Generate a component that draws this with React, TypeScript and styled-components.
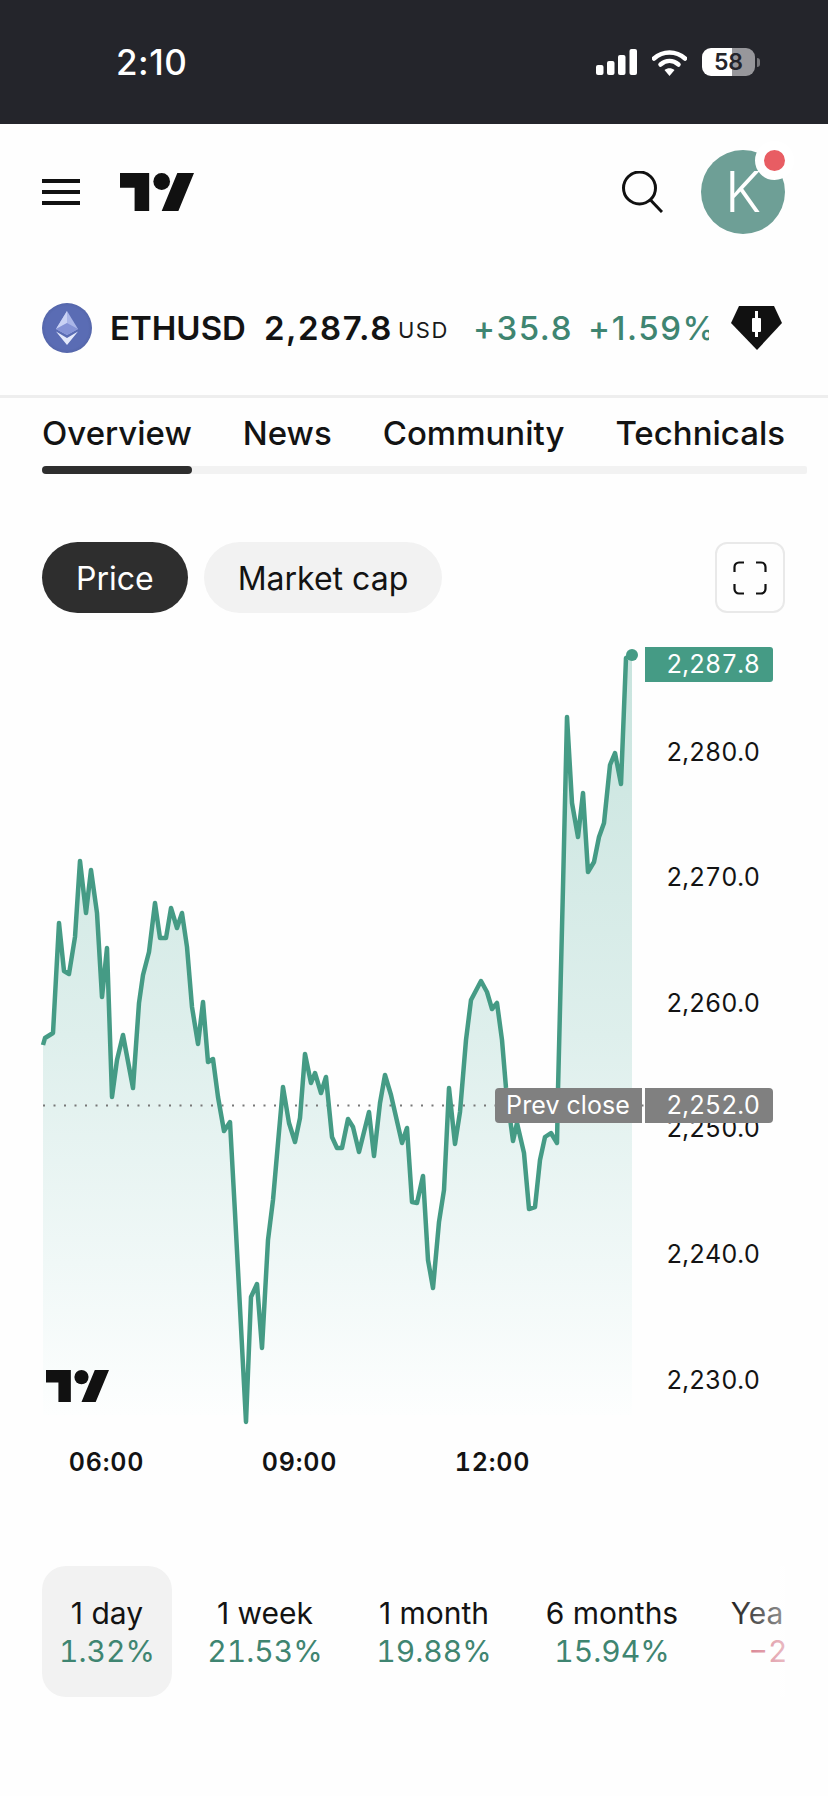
import React from "react";
import styled, { createGlobalStyle } from "styled-components";

const Global = createGlobalStyle`
  html, body { margin: 0; padding: 0; background: #fff; }
  body { width: 828px; height: 1796px; overflow: hidden; font-family: Inter, "Noto Sans", sans-serif; color: #131313; }
`;

const Page = styled.div`
  width: 828px;
  height: 1796px;
  overflow: hidden;
  background: #fefefe;
  display: flex;
  flex-direction: column;
`;

const StatusBar = styled.div`
  height: 124px;
  flex: none;
  background: #24252b;
  display: flex;
  align-items: center;
  padding: 0 73px 0 116px;
  box-sizing: border-box;
`;
const Clock = styled.div`
  color: #fff;
  font-size: 35px;
  font-weight: 500;
  letter-spacing: 0.5px;
  flex: 1;
`;
const StatusIcons = styled.div`
  display: flex;
  align-items: center;
  gap: 15px;
`;
const Battery = styled.div`
  position: relative;
  width: 53px;
  height: 28px;
  border-radius: 9px;
  background: linear-gradient(to right, #fff 0 57%, #97979b 57% 100%);
  color: #24252b;
  font-size: 23px;
  font-weight: 600;
  text-align: center;
  line-height: 28px;
  &::after {
    content: "";
    position: absolute;
    right: -5px;
    top: 10px;
    width: 3px;
    height: 9px;
    border-radius: 0 3px 3px 0;
    background: #77777b;
  }
`;

const Header = styled.div`
  height: 136px;
  flex: none;
  display: flex;
  align-items: center;
  padding: 0 43px 0 42px;
  box-sizing: border-box;
`;
const Burger = styled.div`
  width: 38px;
  height: 26px;
  display: flex;
  flex-direction: column;
  justify-content: space-between;
  margin-right: 40px;
  span {
    display: block;
    height: 4px;
    background: #111;
  }
`;
const HeaderSpacer = styled.div`
  flex: 1;
`;
const Avatar = styled.div`
  position: relative;
  width: 84px;
  height: 84px;
  margin-left: 38px;
  border-radius: 50%;
  background: #6e9f96;
  color: #fff;
  font-size: 56px;
  font-weight: 300;
  text-align: center;
  line-height: 84px;
`;
const AvatarDot = styled.div`
  position: absolute;
  top: -9px;
  right: -9px;
  width: 21px;
  height: 21px;
  border-radius: 50%;
  background: #e85d63;
  border: 9px solid #fff;
`;

const Ticker = styled.div`
  height: 138px;
  flex: none;
  display: flex;
  align-items: center;
  padding: 0 46px 0 42px;
  box-sizing: border-box;
  border-bottom: 3px solid #eeeeee;
`;
const CoinIcon = styled.div`
  width: 50px;
  height: 50px;
  border-radius: 50%;
  background: radial-gradient(circle, #5a6cb4 0 60%, #46568f 100%);
  display: flex;
  align-items: center;
  justify-content: center;
  margin-right: 18px;
  flex: none;
`;
const Symbol = styled.div`
  font-size: 33px;
  font-weight: 600;
  margin-right: 18px;
  white-space: nowrap;
`;
const Quote = styled.div`
  font-size: 33px;
  font-weight: 600;
  letter-spacing: 1.5px;
  white-space: nowrap;
`;
const Currency = styled.div`
  font-size: 22px;
  font-weight: 400;
  letter-spacing: 1.6px;
  margin: 4px 24px 0 5px;
  color: #1a1a1a;
`;
const Change = styled.div`
  width: 236px;
  overflow: hidden;
  display: flex;
  gap: 15px;
  font-size: 33px;
  font-weight: 500;
  letter-spacing: 1.6px;
  color: #3f8571;
  white-space: nowrap;
  flex: none;
`;
const Badge = styled.div`
  margin-left: auto;
  display: flex;
`;

const Tabs = styled.div`
  flex: none;
  padding: 10px 21px 0 42px;
  display: flex;
  flex-direction: column;
`;
const TabRow = styled.div`
  display: flex;
  gap: 51px;
  height: 50px;
  align-items: center;
  margin-bottom: 8px;
`;
const Tab = styled.div`
  font-size: 33px;
  font-weight: 500;
  white-space: nowrap;
`;
const Track = styled.div`
  height: 8px;
  background: #f2f2f2;
  border-radius: 2px;
`;
const TrackActive = styled.div`
  width: 150px;
  height: 8px;
  background: #2e2e2e;
  border-radius: 4px;
`;

const PillRow = styled.div`
  flex: none;
  display: flex;
  align-items: center;
  gap: 16px;
  padding: 68px 43px 0 42px;
`;
const Pill = styled.div<{ $active?: boolean }>`
  height: 71px;
  padding: 2px 34px 0;
  box-sizing: border-box;
  border-radius: 36px;
  display: flex;
  align-items: center;
  font-size: 32px;
  font-weight: 400;
  background: ${(p) => (p.$active ? "#2e2e2e" : "#f2f2f2")};
  color: ${(p) => (p.$active ? "#fff" : "#131313")};
`;
const ExpandButton = styled.div`
  margin-left: auto;
  width: 70px;
  height: 71px;
  box-sizing: border-box;
  border: 2px solid #e9e9e9;
  border-radius: 12px;
  display: flex;
  align-items: center;
  justify-content: center;
`;

const Chart = styled.div`
  position: relative;
  flex: none;
  height: 800px;
  margin-top: 27px;
`;
const ChartSvg = styled.svg`
  display: block;
  position: absolute;
  inset: 0;
`;
const Tick = styled.div<{ $y: number }>`
  position: absolute;
  right: 68px;
  top: ${(p) => p.$y - 640 - 15}px;
  height: 30px;
  line-height: 30px;
  font-size: 25px;
  font-variant-numeric: tabular-nums;
  letter-spacing: -0.1px;
  color: #131313;
`;
const PriceTag = styled.div<{ $bg: string; $top: number; $left: number; $w: number; $corners: string }>`
  position: absolute;
  left: ${(p) => p.$left}px;
  top: ${(p) => p.$top - 640}px;
  width: ${(p) => p.$w}px;
  height: 35px;
  box-sizing: border-box;
  background: ${(p) => p.$bg};
  color: #fff;
  border-radius: ${(p) => p.$corners};
  font-size: 25px;
  font-variant-numeric: tabular-nums;
  letter-spacing: -0.1px;
  line-height: 34px;
  text-align: right;
  padding-right: 13px;
`;
const PrevLabel = styled(PriceTag)`
  letter-spacing: 0.1px;
  padding-right: 12px;
`;
const TimeAxis = styled.div`
  flex: none;
  display: flex;
  padding-left: 10px;
  margin-top: 7px;
  height: 30px;
  align-items: center;
`;
const TimeLabel = styled.div`
  width: 193px;
  text-align: center;
  font-size: 25px;
  font-weight: 600;
  font-variant-numeric: tabular-nums;
  letter-spacing: 0.8px;
`;

const Periods = styled.div`
  position: relative;
  flex: none;
  width: 743px;
  margin: 89px 0 0 42px;
  display: flex;
  overflow: hidden;
`;
const Period = styled.div<{ $active?: boolean; $w: number }>`
  flex: none;
  width: ${(p) => p.$w}px;
  height: 131px;
  padding-top: 1px;
  box-sizing: border-box;
  border-radius: 24px;
  background: ${(p) => (p.$active ? "#f2f2f2" : "transparent")};
  display: flex;
  flex-direction: column;
  align-items: center;
  justify-content: center;
  gap: 5px;
  white-space: nowrap;
`;
const PeriodName = styled.div`
  font-size: 30px;
  line-height: 33px;
  color: #131313;
`;
const PeriodValue = styled.div<{ $down?: boolean }>`
  font-size: 30px;
  line-height: 33px;
  font-variant-numeric: tabular-nums;
  color: ${(p) => (p.$down ? "#cf6578" : "#3f8571")};
`;
const PeriodFade = styled.div`
  position: absolute;
  right: 0;
  top: 0;
  bottom: 0;
  width: 54px;
  background: linear-gradient(to right, rgba(255, 255, 255, 0.05), rgba(255, 255, 255, 0.55));
`;

const pts: [number, number][] = [
  [43,1045],[45,1038],[53,1033],[59,923],[64,971],[69,974],[75,937],[80,861],[86,913],[91,870],[97,913],[102,997],[107,948],[112,1097],[117,1060],[123,1035],[133,1088],[139,1003],[143,975],[149,952],[155,903],[160,938],[166,938],[171,908],[177,928],[182,913],[187,947],[192,1007],[198,1044],[203,1002],[208,1062],[213,1059],[218,1097],[224,1131],[230,1122],[235,1213],[246,1422],[251,1297],[257,1284],[262,1348],[268,1240],[273,1200],[278,1143],[283,1087],[289,1123],[295,1142],[300,1118],[305,1054],[311,1083],[315,1073],[321,1093],[326,1077],[332,1137],[337,1148],[342,1148],[348,1119],[353,1127],[359,1152],[369,1112],[374,1156],[380,1103],[385,1075],[391,1095],[402,1143],[407,1128],[412,1202],[417,1203],[423,1176],[428,1260],[433,1288],[439,1222],[444,1190],[449,1088],[455,1144],[460,1112],[466,1040],[471,1000],[481,981],[487,992],[492,1009],[497,1003],[502,1040],[506,1088],[513,1141],[517,1123],[524,1153],[529,1209],[535,1207],[540,1160],[545,1137],[551,1133],[557,1143],[558,1090],[563,887],[567,717],[572,803],[578,837],[583,793],[588,872],[594,862],[599,837],[604,823],[610,765],[615,753],[621,784],[626,658],[632,655],
];
const linePts = pts.map(([x, y]) => `${x},${y - 640}`).join(" ");
const areaPts = `43,775 ${linePts} 632,775`;

const LOGO = "M14 22H7V11H0V4h14v18zM28 22h-8l7.5-18h8L28 22z";

const Logo = ({ w, h }: { w: number; h: number }) => (
  <svg width={w} height={h} viewBox="0 4 35.5 18" preserveAspectRatio="none">
    <path d={LOGO} fill="#111" />
    <circle cx="20" cy="8" r="4" fill="#111" />
  </svg>
);

export default function App() {
  return (
    <Page>
      <Global />
      <StatusBar>
        <Clock>2:10</Clock>
        <StatusIcons>
          <svg width="41" height="26" viewBox="0 0 41 26">
            <rect x="0" y="16" width="7.5" height="10" rx="2" fill="#fff" />
            <rect x="11" y="12" width="7.5" height="14" rx="2" fill="#fff" />
            <rect x="22" y="6" width="7.5" height="20" rx="2" fill="#fff" />
            <rect x="33.5" y="0" width="7.5" height="26" rx="2" fill="#fff" />
          </svg>
          <svg width="35" height="27" viewBox="0 0 35 27">
            <path d="M2 9.5C11 1.5 24 1.5 33 9.5" fill="none" stroke="#fff" strokeWidth="4.5" strokeLinecap="round" />
            <path d="M8.5 15.5C14 10.8 21 10.8 26.5 15.5" fill="none" stroke="#fff" strokeWidth="4.5" strokeLinecap="round" />
            <path d="M12.5 21 L17.5 27 L22.5 21 C19.5 18.6 15.5 18.6 12.5 21Z" fill="#fff" />
          </svg>
          <Battery>58</Battery>
        </StatusIcons>
      </StatusBar>

      <Header>
        <Burger><span /><span /><span /></Burger>
        <Logo w={74} h={38} />
        <HeaderSpacer />
        <svg width="42" height="42" viewBox="0 0 42 42">
          <circle cx="18.5" cy="17" r="16" fill="none" stroke="#111" strokeWidth="3" />
          <path d="M29.5 29 L41 41" stroke="#111" strokeWidth="3" />
        </svg>
        <Avatar>
          K
          <AvatarDot />
        </Avatar>
      </Header>

      <Ticker>
        <CoinIcon>
          <svg width="22" height="34" viewBox="0 0 22 34">
            <path d="M11 0 L22 18 L11 24 L0 18Z" fill="#aab6e8" />
            <path d="M11 0 L0 18 L11 12Z" fill="#c9d2f4" />
            <path d="M11 12 L22 18 L11 24 L0 18Z" fill="#8593d6" />
            <path d="M0 20.5 L11 27 L22 20.5 L11 34Z" fill="#e4e9fb" />
          </svg>
        </CoinIcon>
        <Symbol>ETHUSD</Symbol>
        <Quote>2,287.8</Quote>
        <Currency>USD</Currency>
        <Change><span>+35.8</span><span>+1.59%</span></Change>
        <Badge>
          <svg width="51" height="44" viewBox="0 0 51 44">
            <path d="M8 0H43L51 17L26 44L0 17Z" fill="#111" />
            <rect x="21" y="12" width="9" height="14" rx="1" fill="#fff" />
            <rect x="24" y="5" width="3" height="26" fill="#fff" />
          </svg>
        </Badge>
      </Ticker>

      <Tabs>
        <TabRow>
          <Tab>Overview</Tab>
          <Tab>News</Tab>
          <Tab>Community</Tab>
          <Tab>Technicals</Tab>
        </TabRow>
        <Track><TrackActive /></Track>
      </Tabs>

      <PillRow>
        <Pill $active>Price</Pill>
        <Pill>Market cap</Pill>
        <ExpandButton>
          <svg width="34" height="34" viewBox="0 0 34 34">
            <path d="M1.5 11V6a4.5 4.5 0 0 1 4.5-4.5h5M23 1.5h5a4.5 4.5 0 0 1 4.5 4.5v5M32.5 23v5a4.5 4.5 0 0 1-4.5 4.5h-5M11 32.5H6A4.5 4.5 0 0 1 1.5 28v-5" fill="none" stroke="#111" strokeWidth="2.2" />
          </svg>
        </ExpandButton>
      </PillRow>

      <Chart>
        <ChartSvg width="828" height="800" viewBox="0 0 828 800">
          <defs>
            <linearGradient id="area" gradientUnits="userSpaceOnUse" x1="0" y1="15" x2="0" y2="775">
              <stop offset="0" stopColor="#c8e4de" />
              <stop offset="0.5" stopColor="#deefec" />
              <stop offset="0.8" stopColor="#f0f8f7" />
              <stop offset="1" stopColor="#fdfefe" />
            </linearGradient>
          </defs>
          <polygon points={areaPts} fill="url(#area)" />
          <line x1="43" y1="465.5" x2="645" y2="465.5" stroke="#777" strokeWidth="2" strokeDasharray="2 8.5" />
          <polyline points={linePts} fill="none" stroke="#459b85" strokeWidth="4.5" strokeLinejoin="round" />
          <circle cx="632" cy="15" r="6" fill="#459b85" />
          <g transform="translate(46 730)">
            <svg width="63" height="32" viewBox="0 4 35.5 18" preserveAspectRatio="none">
              <path d={LOGO} fill="#111" />
              <circle cx="20" cy="8" r="4" fill="#111" />
            </svg>
          </g>
        </ChartSvg>
        {[[752, "2,280.0"], [877, "2,270.0"], [1003, "2,260.0"], [1128, "2,250.0"], [1254, "2,240.0"], [1380, "2,230.0"]].map(([y, t]) => (
          <Tick key={t} $y={y as number}>{t}</Tick>
        ))}
        <PriceTag $bg="#459b85" $top={647} $left={645} $w={128} $corners="0 3px 3px 0">2,287.8</PriceTag>
        <PrevLabel $bg="#808080" $top={1088} $left={495} $w={147} $corners="4px 0 0 4px">Prev close</PrevLabel>
        <PriceTag $bg="#808080" $top={1088} $left={645} $w={128} $corners="0 4px 4px 0">2,252.0</PriceTag>
      </Chart>

      <TimeAxis>
        <TimeLabel>06:00</TimeLabel>
        <TimeLabel>09:00</TimeLabel>
        <TimeLabel>12:00</TimeLabel>
      </TimeAxis>

      <Periods>
        <Period $active $w={130}><PeriodName>1 day</PeriodName><PeriodValue>1.32%</PeriodValue></Period>
        <Period $w={186}><PeriodName>1 week</PeriodName><PeriodValue>21.53%</PeriodValue></Period>
        <Period $w={152}><PeriodName>1 month</PeriodName><PeriodValue>19.88%</PeriodValue></Period>
        <Period $w={204}><PeriodName>6 months</PeriodName><PeriodValue>15.94%</PeriodValue></Period>
        <Period $w={204}><PeriodName>Year to date</PeriodName><PeriodValue $down>−20.41%</PeriodValue></Period>
        <PeriodFade />
      </Periods>
    </Page>
  );
}
